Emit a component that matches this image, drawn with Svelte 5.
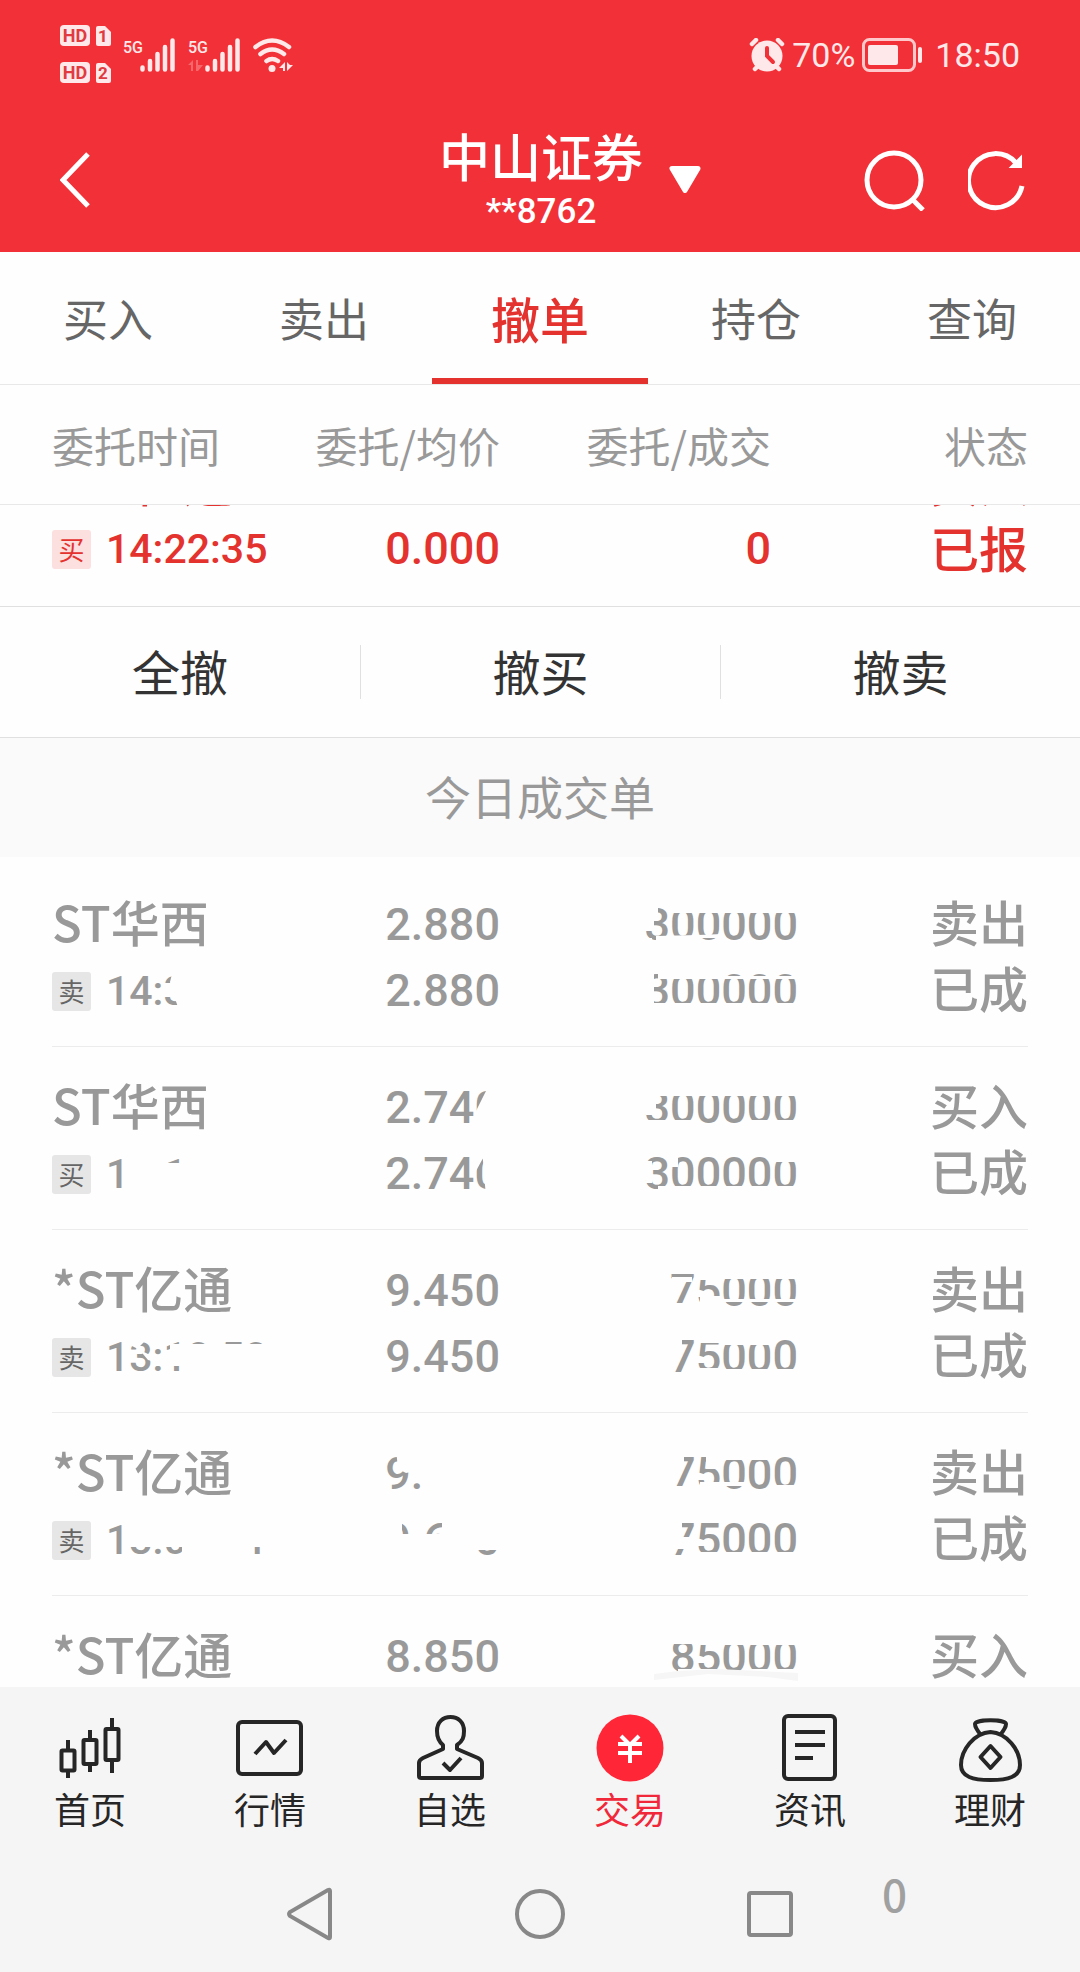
<script>
    const tabs = ["买入", "卖出", "撤单", "持仓", "查询"];
    let activeTab = "撤单";

    const columns = ["委托时间", "委托/均价", "委托/成交", "状态"];
    const actions = ["全撤", "撤买", "撤卖"];

    const pending = [
        { name: "*ST亿通", side: "买", time: "14:22:35", price: "0.000", amount: "0", action: "买入", status: "已报" }
    ];

    // every value can carry a wipe: the shape that is rubbed out of the text
    const deals = [
        {
            name: "ST华西",
            side: "卖",
            time: { text: "14:3", wipe: "M68 8H100V60H76L68 38L64 24Z M58 25H70V39H58Z" },
            prices: [{ text: "2.880" }, { text: "2.880" }],
            amounts: [
                { text: "300000", wipe: "M0 8H20V22H16V36H0Z M33 8H160V21H33Z M18 44L60 43L84 42V46H62L40 53H18Z M0 46H14V54H0Z" },
                { text: "300000", wipe: "M0 8H16V54H8V40H0Z M20 8H84V21H20Z M84 18H160V21H84Z M16 45H160V54H16Z" }
            ],
            action: "卖出",
            status: "已成"
        },
        {
            name: "ST华西",
            side: "买",
            time: { text: "11:10", wipe: "M23 8H62V60H23Z M60 22H120V60H60Z M75 8H120V24H75Z" },
            prices: [
                { text: "2.740", wipe: "M116 8V56H89L91 38L106 8Z" },
                { text: "2.740", wipe: "M116 8V56H102L98 8Z M90 8H104L92 30Z" }
            ],
            amounts: [
                { text: "300000", wipe: "M0 8H160V21H18V40H8V21H0Z M0 45H58V54H0Z M110 45H160V54H110Z" },
                { text: "300000", wipe: "M0 20H14V42H8V28H0Z M31 8H40V26H31Z M20 45H160V54H20Z M134 8H160V21H134Z" }
            ],
            action: "买入",
            status: "已成"
        },
        {
            name: "*ST亿通",
            side: "卖",
            time: { text: "13:10:50", wipe: "M26 8H56V12H44L32 24L42 36L58 40V50H64V20H180V58H78V42H50V34L26 22Z" },
            prices: [{ text: "9.450" }, { text: "9.450" }],
            amounts: [
                { text: "75000", wipe: "M34 19H54V24H34Z M62 8H84V22H62Z M62 38H84V54H62Z M30 45H62V54H30Z M84 8H160V21H84Z M84 41H160V44H84Z" },
                { text: "75000", wipe: "M30 8H44V24H30Z M62 8H84V19H62Z M58 44H84V54H58Z M84 8H136V21H84Z M84 45H160V54H84Z" }
            ],
            action: "卖出",
            status: "已成"
        },
        {
            name: "*ST亿通",
            side: "卖",
            time: { text: "13:00:01", wipe: "M23 8H140V60H132V50H76V40H23Z M76 40H138V60H76Z M130 8H180V40H130Z" },
            prices: [
                { text: "9.480", wipe: "M38 8H116V60H38Z M12 8H32V30L22 32L14 28Z" },
                { text: "9.680", wipe: "M0 8H18V60H0Z M10 27H90V60H10Z M58 8H90V30H58Z M86 8H116V43H86Z" }
            ],
            amounts: [
                { text: "75000", wipe: "M30 8H46V21H30Z M68 8H84V28H68Z M62 41H110V45H62Z M30 45H84V54H30Z M84 8H134V19H84Z M136 44H160V54H136Z" },
                { text: "75000", wipe: "M30 8H44V22H30Z M30 30H54V42H30Z M60 45H160V54H60Z" }
            ],
            action: "卖出",
            status: "已成"
        },
        {
            name: "*ST亿通",
            prices: [{ text: "8.850" }],
            amounts: [
                { text: "85000", wipe: "M34 8H60V20H34Z M62 8H84V21H62Z M84 8H160V21H84Z M40 45H84V54H40Z M110 45H160V54H110Z", smear: true }
            ],
            action: "买入"
        }
    ];

    const navItems = ["首页", "行情", "自选", "交易", "资讯", "理财"];
    let activeNav = "交易";
</script>

{#snippet masked(value)}
    <span class="num">
        {value.text}
        {#if value.wipe}
            <svg class="wipe" width="160" height="66" viewBox="0 0 160 66" aria-hidden="true">
                <path d={value.wipe} />
                {#if value.smear}
                    <path class="smear" d="M16 50L40 47L80 45L160 49V57L130 53L70 50L16 56Z" />
                {/if}
            </svg>
        {/if}
    </span>
{/snippet}

{#snippet maskedPrice(value)}
    <span class="num">
        {value.text}
        {#if value.wipe}
            <svg class="wipe" width="116" height="66" viewBox="0 0 116 66" aria-hidden="true"><path d={value.wipe} /></svg>
        {/if}
    </span>
{/snippet}

<div class="app">
    <div class="status-bar">
        <div class="signals">
            <svg width="52" height="60" viewBox="0 0 52 60">
                {#each [1, 2] as sim, i}
                    <g transform="translate(0 {i * 37})">
                        <rect width="30" height="21" rx="4" />
                        <text class="cut" x="15" y="17" font-size="18">HD</text>
                        <path d="M38 1h7l6 6v12a2 2 0 0 1-2 2h-11a2 2 0 0 1-2-2V3a2 2 0 0 1 2-2z" />
                        <text class="cut" x="43" y="17" font-size="17">{sim}</text>
                    </g>
                {/each}
            </svg>
            {#each [false, true] as traffic}
                <svg width="54" height="34" viewBox="0 0 54 34">
                    <text class="gen" x="0" y="15" font-size="16">5G</text>
                    {#if traffic}
                        <path opacity="0.3" d="M0 27l5-5v11H3v-6zM8 22v11h2l5-6h-5v-5z" />
                    {/if}
                    <path class="bars" d="M19.500 29.500v2M27 23v8.500M34.500 16v15.500M42 9v22.500M49.500 2.500v29" />
                </svg>
            {/each}
            <svg width="42" height="34" viewBox="0 0 42 34">
                <g fill="none" stroke="#ffe8e9" stroke-width="4.500" stroke-linecap="round">
                    <path d="M2.500 9Q19 -4 36 9M7.500 16Q19 7 31 16M13.500 23Q19 19 25 23" />
                </g>
                <circle cx="19" cy="30.500" r="3.500" />
                <path d="M26 30l6-6v9h-2v-3zM34 24v9l6-6h-3z" />
            </svg>
        </div>
        <div class="power">
            <svg width="36" height="34" viewBox="0 0 36 34">
                <circle cx="18" cy="18" r="15.500" />
                <path class="bars" d="M3 6l4-4M33 6l-4-4M6 31l3-3M30 31l-3-3" />
                <path class="clock" d="M18 10v8l6 6" />
            </svg>
            <span>70%</span>
            <svg width="62" height="34" viewBox="0 0 62 34">
                <rect class="case" x="1.500" y="1.500" width="51" height="31" rx="6" />
                <rect x="6" y="7" width="30" height="20" rx="2" />
                <rect x="56" y="9" width="4" height="16" rx="2" />
            </svg>
            <span class="clock-text">18:50</span>
        </div>
    </div>

    <header>
        <button class="icon-btn back" aria-label="返回">
            <svg width="30" height="56" viewBox="0 0 30 56"><path d="M28 2L3 28l25 26" /></svg>
        </button>
        <button class="account">
            <span class="account-name">
                <strong>中山证券</strong>
                <small>**8762</small>
            </span>
            <svg width="34" height="28" viewBox="0 0 34 28">
                <path d="M4 2.500h26L17 24.500z" fill="#fff" stroke="#fff" stroke-width="5" stroke-linejoin="round" />
            </svg>
        </button>
        <div class="tools">
            <button class="icon-btn" aria-label="搜索">
                <svg width="62" height="62" viewBox="0 0 62 62"><circle cx="30" cy="31" r="27" /><path d="M48 50l11 11" /></svg>
            </button>
            <button class="icon-btn" aria-label="刷新">
                <svg width="58" height="62" viewBox="0 0 58 62">
                    <path d="M48 14A27 27 0 1 0 54 37" />
                    <path d="M53 8v10H43z" fill="#fff" stroke-width="2" />
                </svg>
            </button>
        </div>
    </header>

    <nav class="tabs">
        {#each tabs as tab}
            <button class:active={tab === activeTab} on:click={() => (activeTab = tab)}>{tab}</button>
        {/each}
    </nav>

    <table class="orders">
        <thead>
            <tr>
                {#each columns as column}
                    <th>{column}</th>
                {/each}
            </tr>
        </thead>
        <tbody>
            {#each pending as order}
                <tr>
                    <td>
                        <span class="label">{order.name}</span>
                        <span class="stamp"><i>{order.side}</i><span class="time">{order.time}</span></span>
                    </td>
                    <td><span class="num">{order.price}</span></td>
                    <td><span class="num">{order.amount}</span></td>
                    <td>
                        <span class="label">{order.action}</span>
                        <span class="label">{order.status}</span>
                    </td>
                </tr>
            {/each}
        </tbody>
    </table>

    <div class="actions">
        {#each actions as action}
            <button>{action}</button>
        {/each}
    </div>

    <h2>今日成交单</h2>

    <div class="deals">
        <table>
            <tbody>
                {#each deals as deal}
                    <tr>
                        <td>
                            <span class="label">{deal.name}</span>
                            {#if deal.time}
                                <span class="stamp">
                                    <i>{deal.side}</i>
                                    <span class="time">
                                        {deal.time.text}
                                        <svg class="wipe from-left" width="180" height="66" viewBox="0 0 180 66" aria-hidden="true"><path d={deal.time.wipe} /></svg>
                                    </span>
                                </span>
                            {/if}
                        </td>
                        <td>
                            {#each deal.prices as price}
                                {@render maskedPrice(price)}
                            {/each}
                        </td>
                        <td>
                            {#each deal.amounts as amount}
                                {@render masked(amount)}
                            {/each}
                        </td>
                        <td>
                            <span class="label">{deal.action}</span>
                            {#if deal.status}<span class="label">{deal.status}</span>{/if}
                        </td>
                    </tr>
                {/each}
            </tbody>
        </table>
    </div>

    <footer>
        <nav class="main-nav">
            {#each navItems as item}
                <button class:active={item === activeNav} on:click={() => (activeNav = item)}>
                    <svg width="70" height="70" viewBox="0 0 70 70">
                        {#if item === "首页"}
                            <g stroke-width="4">
                                <rect x="6.500" y="37.500" width="13" height="20" rx="1" />
                                <rect x="28.500" y="27" width="13" height="24" rx="1" />
                                <rect x="50.500" y="16" width="13" height="31" rx="1" />
                                <path d="M13 27v10M13 58v7M35 17v10M35 51v8M57 5v11M57 47v13" />
                            </g>
                        {:else if item === "行情"}
                            <rect x="3" y="9" width="63" height="52" rx="4" />
                            <path d="M20 41l11-12 8 11 12-13" />
                        {:else if item === "自选"}
                            <path d="M28 36v-4c-5-4-6-8-6-14C22 9 28 4 35.500 4S49 9 49 18c0 6-1 10-7 14v4l21 9q4 2 4 5v13q0 2-2 2H6q-2 0-2-2V50q0-3 4-5z" />
                            <path d="M28 50l7 7 11-12" />
                        {:else if item === "交易"}
                            <circle class="coin" cx="35" cy="35" r="33.500" />
                            <path class="yen" d="M26 23l9 9 9-9M23 31h24M23 40h24M35 32v18" />
                        {:else if item === "资讯"}
                            <rect x="9" y="3" width="51" height="63" rx="4" />
                            <path d="M20 19h30M20 32h30M20 45h18" />
                        {:else}
                            <path d="M26 22q-6-7-6-11c0-5 31-5 31 0q0 4-6 11" />
                            <path d="M35.500 19C19 20 6 37 6 52c0 12 12 15 29.500 15S65 64 65 52C65 37 52 20 35.500 19z" />
                            <path d="M35.500 33l10 11-10 11-10-11z" />
                        {/if}
                    </svg>
                    {item}
                </button>
            {/each}
        </nav>

        <div class="system-nav">
            <button aria-label="后退">
                <svg width="50" height="54" viewBox="0 0 50 54"><path d="M43 3q2-1 2 1v46q0 2-2 1L5 29q-2-2 0-4z" /></svg>
            </button>
            <button aria-label="主屏幕">
                <svg width="54" height="54" viewBox="0 0 54 54"><circle cx="27" cy="27" r="23" /></svg>
            </button>
            <button aria-label="最近任务">
                <svg width="50" height="54" viewBox="0 0 50 54"><rect x="4" y="6" width="42" height="42" rx="2" /></svg>
            </button>
            <span class="stray">0</span>
        </div>
    </footer>
</div>

<style>
    :global(body) {
        margin: 0;
        background: #fefefe;
    }

    .app {
        height: 100vh;
        display: flex;
        flex-direction: column;
        overflow: hidden;
        background: #fefefe;
        color: #999;
        font-family: "Noto Sans CJK SC", sans-serif;
        font-size: 48px;
    }

    button {
        padding: 0;
        border: 0;
        background: none;
        color: inherit;
        font: inherit;
        cursor: pointer;
    }

    svg {
        display: block;
        flex: none;
    }

    /* status bar */
    .status-bar {
        height: 108px;
        padding: 2px 60px 0;
        box-sizing: border-box;
        display: flex;
        justify-content: space-between;
        align-items: center;
        background: #f23037;
        color: #ffe8e9;
        font-family: Roboto, sans-serif;
        font-size: 34px;
    }

    .signals,
    .power {
        display: flex;
        align-items: center;
    }

    .signals {
        gap: 11px;
    }

    .status-bar svg {
        fill: #ffe8e9;
    }

    .cut {
        fill: #e03a42;
        font-weight: 700;
        text-anchor: middle;
    }

    .gen {
        font-weight: 500;
        font-family: Roboto, sans-serif;
    }

    .bars {
        stroke: #ffe8e9;
        stroke-width: 4.5;
        stroke-linecap: round;
    }

    .clock {
        fill: none;
        stroke: #f23037;
        stroke-width: 4;
        stroke-linecap: round;
    }

    .status-bar .case {
        fill: none;
        stroke: #ffc9cb;
        stroke-width: 3;
    }

    .status-bar .clock {
        fill: none;
    }

    .power {
        gap: 7px;
    }

    .clock-text {
        padding-left: 4px;
    }

    /* title bar */
    header {
        height: 144px;
        padding: 0 54px 0 60px;
        display: grid;
        grid-template-columns: 1fr auto 1fr;
        align-items: center;
        background: #f23037;
        color: #fff;
    }

    .icon-btn svg {
        fill: none;
        stroke: #fff;
        stroke-width: 5;
    }

    .back {
        justify-self: start;
    }

    .account {
        display: flex;
        align-items: center;
        gap: 25px;
        padding-left: 55px;
    }

    .account-name {
        display: flex;
        flex-direction: column;
        padding-top: 6px;
    }

    .account strong {
        font-size: 51px;
        font-weight: 500;
        line-height: 58px;
    }

    .account small {
        font-family: Roboto, sans-serif;
        font-size: 35px;
        font-weight: 500;
        line-height: 56px;
    }

    .tools {
        display: flex;
        justify-content: flex-end;
        gap: 42px;
    }

    /* tabs */
    .tabs {
        display: grid;
        grid-template-columns: repeat(5, 1fr);
        border-bottom: 1px solid #e8e8e8;
        color: #666;
        font-size: 45px;
    }

    .tabs button {
        height: 132px;
        box-sizing: border-box;
        padding-top: 5px;
        border-bottom: 6px solid transparent;
    }

    .tabs .active {
        border-color: #e4322f;
        color: #e4322f;
        font-size: 49px;
        font-weight: 500;
    }

    /* tables */
    table,
    thead,
    tbody {
        display: block;
    }

    tr {
        display: grid;
        grid-template-columns: 240fr 208fr 271fr 257fr;
        padding: 0 52px;
    }

    th,
    td {
        padding: 0;
        text-align: right;
        white-space: nowrap;
    }

    th:first-child,
    td:first-child {
        text-align: left;
    }

    th {
        font-size: 42px;
        font-weight: 400;
        line-height: 119px;
    }

    thead {
        border-bottom: 1px solid #e8e8e8;
    }

    td {
        display: flex;
        flex-direction: column;
        align-items: flex-end;
        justify-content: flex-end;
        font-weight: 500;
        line-height: 66px;
    }

    td:first-child {
        align-items: flex-start;
    }

    .orders tbody {
        height: 101px;
        display: flex;
        flex-direction: column;
        justify-content: flex-end;
        overflow: hidden;
        border-bottom: 1px solid #e0e0e0;
        color: #e4322f;
    }

    .orders td {
        padding-bottom: 24px;
    }

    .label {
        height: 66px;
        font-size: 49px;
        line-height: 58px;
    }

    .orders .label {
        line-height: 62px;
    }

    .num,
    .time {
        position: relative;
        height: 66px;
        font-family: Roboto, sans-serif;
        font-size: 45px;
    }

    .time {
        font-size: 41px;
    }

    .wipe {
        position: absolute;
        top: 0;
        right: 0;
        fill: #fefefe;
    }

    .from-left {
        right: auto;
        left: 0;
    }

    .smear {
        fill: #f6f6f6;
    }

    .stamp {
        display: flex;
        align-items: center;
        gap: 15px;
    }

    .stamp i {
        width: 39px;
        height: 39px;
        border-radius: 3px;
        background: #e6e6e6;
        color: #666;
        font-size: 26px;
        font-style: normal;
        font-weight: 400;
        line-height: 37px;
        text-align: center;
    }

    .orders .stamp i {
        background: #fbe0df;
        color: #e4322f;
    }

    /* cancel buttons */
    .actions {
        display: grid;
        grid-template-columns: repeat(3, 1fr);
        padding: 38px 0;
        border-bottom: 1px solid #e0e0e0;
        color: #333;
    }

    .actions button {
        height: 54px;
        padding-bottom: 4px;
        line-height: 50px;
    }

    .actions button + button {
        border-left: 1px solid #e0e0e0;
    }

    h2 {
        margin: 0;
        padding-bottom: 4px;
        background: #fafafa;
        font-size: 46px;
        font-weight: 400;
        line-height: 115px;
        text-align: center;
    }

    /* deals of the day */
    .deals {
        flex: 1;
        min-height: 0;
        padding: 7px 52px 0;
        overflow: hidden;
    }

    .deals tr {
        grid-template-columns: 240fr 208fr 298fr 230fr;
        padding: 28px 0 22px;
        border-bottom: 1px solid #ececec;
    }

    .deals td {
        justify-content: flex-start;
    }

    /* bottom */
    footer {
        background: #f5f5f5;
        color: #262626;
    }

    .main-nav {
        display: grid;
        grid-template-columns: repeat(6, 1fr);
        padding-top: 26px;
        font-size: 36px;
        line-height: 48px;
    }

    .main-nav button {
        display: flex;
        flex-direction: column;
        align-items: center;
        gap: 1px;
    }

    .main-nav svg {
        fill: none;
        stroke: #262626;
        stroke-width: 4;
        stroke-linejoin: round;
    }

    .main-nav .active {
        color: #f0283a;
    }

    .main-nav .coin {
        fill: #ff2638;
        stroke: none;
    }

    .main-nav .yen {
        stroke: #fff;
    }

    .system-nav {
        position: relative;
        display: grid;
        grid-template-columns: repeat(3, 1fr);
        justify-items: center;
        align-items: center;
        height: 116px;
        margin-top: 24px;
        padding: 0 18%;
    }

    .system-nav svg {
        fill: none;
        stroke: #888;
        stroke-width: 4;
    }

    .stray {
        position: absolute;
        top: 4px;
        right: 16%;
        color: #a0a0a0;
        font-size: 44px;
        font-weight: 500;
        line-height: 66px;
    }
</style>
